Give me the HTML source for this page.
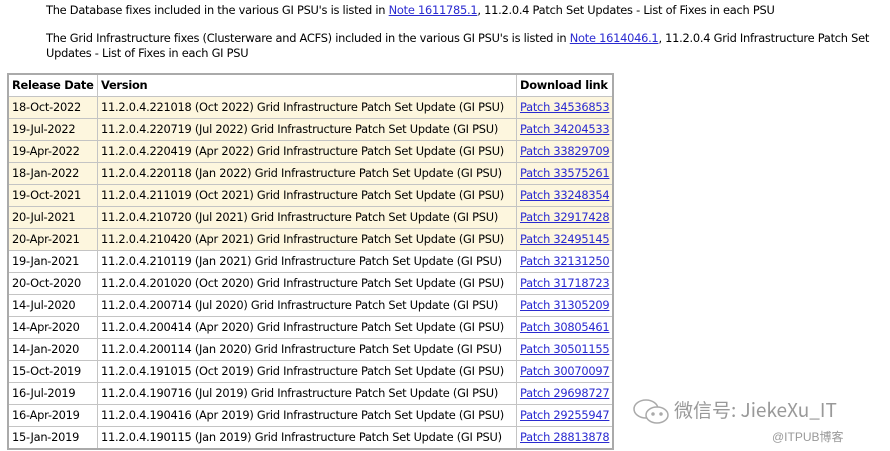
<!DOCTYPE html>
<html><head><meta charset="utf-8"><style>
body{margin:0;width:890px;height:451px;overflow:hidden;background:#fff;font-family:"DejaVu Sans","Liberation Sans",sans-serif;font-size:11.4px;color:#000;position:relative;letter-spacing:-0.25px}
p{position:absolute;left:46px;margin:0;line-height:15px;white-space:nowrap}
a{text-decoration:underline;color:#2a2ad0}
table{position:absolute;left:7px;top:73px;border-collapse:collapse;border:2px solid #aaa}
td,th{border:1px solid #c4c4c4;padding:0 3px;white-space:nowrap;text-align:left;line-height:21px;height:21px;box-sizing:content-box}
th{font-weight:bold;height:21px;line-height:21px}
tr.h td{background:#fdf6de}
.wm{position:absolute;left:632px;top:396px;font-family:"Noto Sans CJK SC",sans-serif;color:#999;font-size:19px;letter-spacing:0}
.wm2{position:absolute;left:772px;top:428px;font-family:"Liberation Sans","Noto Sans CJK SC",sans-serif;color:#999;font-size:12px;letter-spacing:0}
</style></head><body>
<p style="top:3px">The Database fixes included in the various GI PSU's is listed in <a>Note 1611785.1</a>, 11.2.0.4 Patch Set Updates - List of Fixes in each PSU</p>
<p style="top:31px">The Grid Infrastructure fixes (Clusterware and ACFS) included in the various GI PSU's is listed in <a>Note 1614046.1</a>, 11.2.0.4 Grid Infrastructure Patch Set<br>Updates - List of Fixes in each GI PSU</p>
<table>
<tr><th style="width:82px">Release Date</th><th style="width:412px">Version</th><th style="width:89px">Download link</th></tr>
<tr class="h"><td>18-Oct-2022</td><td>11.2.0.4.221018 (Oct 2022) Grid Infrastructure Patch Set Update (GI PSU)</td><td><a>Patch 34536853</a></td></tr>
<tr class="h"><td>19-Jul-2022</td><td>11.2.0.4.220719 (Jul 2022) Grid Infrastructure Patch Set Update (GI PSU)</td><td><a>Patch 34204533</a></td></tr>
<tr class="h"><td>19-Apr-2022</td><td>11.2.0.4.220419 (Apr 2022) Grid Infrastructure Patch Set Update (GI PSU)</td><td><a>Patch 33829709</a></td></tr>
<tr class="h"><td>18-Jan-2022</td><td>11.2.0.4.220118 (Jan 2022) Grid Infrastructure Patch Set Update (GI PSU)</td><td><a>Patch 33575261</a></td></tr>
<tr class="h"><td>19-Oct-2021</td><td>11.2.0.4.211019 (Oct 2021) Grid Infrastructure Patch Set Update (GI PSU)</td><td><a>Patch 33248354</a></td></tr>
<tr class="h"><td>20-Jul-2021</td><td>11.2.0.4.210720 (Jul 2021) Grid Infrastructure Patch Set Update (GI PSU)</td><td><a>Patch 32917428</a></td></tr>
<tr class="h"><td>20-Apr-2021</td><td>11.2.0.4.210420 (Apr 2021) Grid Infrastructure Patch Set Update (GI PSU)</td><td><a>Patch 32495145</a></td></tr>
<tr><td>19-Jan-2021</td><td>11.2.0.4.210119 (Jan 2021) Grid Infrastructure Patch Set Update (GI PSU)</td><td><a>Patch 32131250</a></td></tr>
<tr><td>20-Oct-2020</td><td>11.2.0.4.201020 (Oct 2020) Grid Infrastructure Patch Set Update (GI PSU)</td><td><a>Patch 31718723</a></td></tr>
<tr><td>14-Jul-2020</td><td>11.2.0.4.200714 (Jul 2020) Grid Infrastructure Patch Set Update (GI PSU)</td><td><a>Patch 31305209</a></td></tr>
<tr><td>14-Apr-2020</td><td>11.2.0.4.200414 (Apr 2020) Grid Infrastructure Patch Set Update (GI PSU)</td><td><a>Patch 30805461</a></td></tr>
<tr><td>14-Jan-2020</td><td>11.2.0.4.200114 (Jan 2020) Grid Infrastructure Patch Set Update (GI PSU)</td><td><a>Patch 30501155</a></td></tr>
<tr><td>15-Oct-2019</td><td>11.2.0.4.191015 (Oct 2019) Grid Infrastructure Patch Set Update (GI PSU)</td><td><a>Patch 30070097</a></td></tr>
<tr><td>16-Jul-2019</td><td>11.2.0.4.190716 (Jul 2019) Grid Infrastructure Patch Set Update (GI PSU)</td><td><a>Patch 29698727</a></td></tr>
<tr><td>16-Apr-2019</td><td>11.2.0.4.190416 (Apr 2019) Grid Infrastructure Patch Set Update (GI PSU)</td><td><a>Patch 29255947</a></td></tr>
<tr><td>15-Jan-2019</td><td>11.2.0.4.190115 (Jan 2019) Grid Infrastructure Patch Set Update (GI PSU)</td><td><a>Patch 28813878</a></td></tr>
</table>
<svg style="position:absolute;left:632px;top:398px" width="40" height="28" viewBox="0 0 40 28" fill="none" stroke="#aaa" stroke-width="1.5"><ellipse cx="14" cy="11" rx="12" ry="9"/><ellipse cx="25" cy="17" rx="11" ry="8" fill="#fff"/><circle cx="21" cy="16" r="1" fill="#aaa"/><circle cx="29" cy="16" r="1" fill="#aaa"/></svg>
<div class="wm" style="left:674px">微信号: JiekeXu_IT</div>
<div class="wm2">@ITPUB博客</div>
</body></html>
